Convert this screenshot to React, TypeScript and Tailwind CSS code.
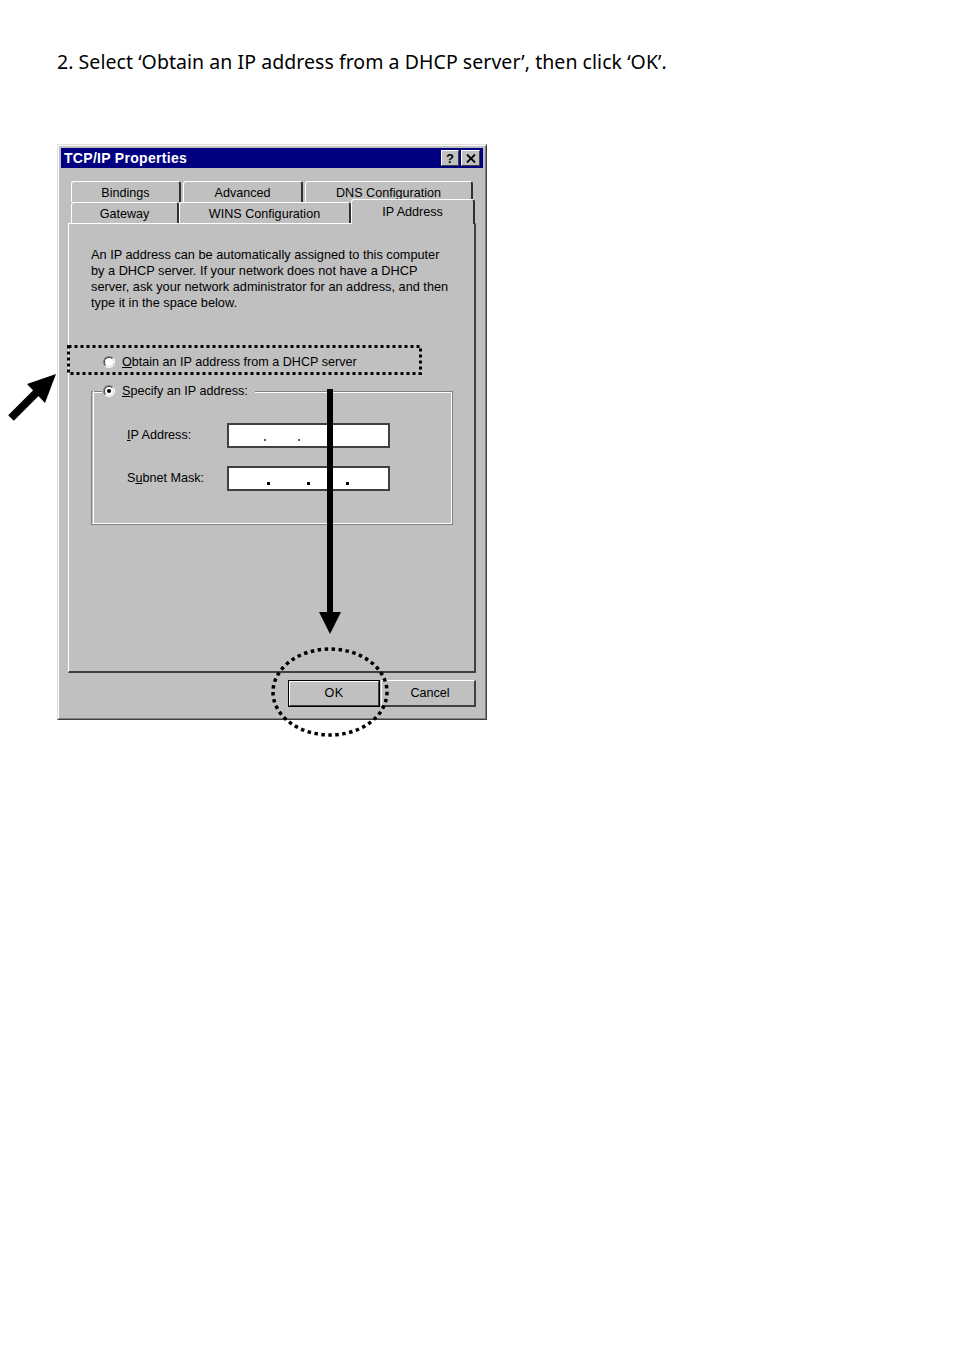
import React from "react";

const face = "bg-[#c0c0c0]";

function Tab({ w, label, selected }: { w: string; label: string; selected?: boolean }) {
  return (
    <div
      className={`${w} ${selected ? "h-[25px] -mt-[3px] z-10 pb-[1px]" : "h-[21px] pt-[2px]"} ${face} relative flex items-center justify-center border-t border-l border-t-white border-l-white rounded-tl-[3px] rounded-tr-[3px] border-r-2 border-r-[#303030] shrink-0 leading-[14px]`}
    >
      <span>{label}</span>
    </div>
  );
}

function Radio({ checked }: { checked?: boolean }) {
  return (
    <div className="w-[12px] h-[12px] rounded-full border border-t-[#808080] border-l-[#808080] border-r-white border-b-white flex items-center justify-center shrink-0">
      <div className="w-[10px] h-[10px] rounded-full bg-white border border-t-[#404040] border-l-[#404040] border-r-[#dfdfdf] border-b-[#dfdfdf] flex items-center justify-center">
        {checked && <div className="w-[4px] h-[4px] rounded-full bg-black" />}
      </div>
    </div>
  );
}

function IpBox({ dots, dark }: { dots: number[]; dark?: boolean }) {
  return (
    <div className="w-[163px] h-[25px] bg-white border-2 border-[#404040] relative">
      {dots.map((x, i) => (
        <span
          key={i}
          className={`absolute top-[14px] ${dark ? "bg-black w-[3px] h-[3px]" : "bg-[#606060] w-[2px] h-[2px]"}`}
          style={{ left: x }}
        />
      ))}
    </div>
  );
}

export default function App() {
  return (
    <div className="relative w-[954px] h-[1350px] bg-white overflow-hidden">
      <div className="pt-[49px] pl-[57px]">
        <p className="text-[19.5px] leading-[26px] text-black" style={{ fontFamily: '"Noto Sans", "Open Sans", sans-serif' }}>
          <span className="tracking-[0.05px]">2. Select ‘Obtain an IP address from a DHCP server’, then click ‘OK’.</span>
        </p>

        {/* Dialog */}
        <div
          className={`mt-[69px] w-[430px] h-[576px] ${face} border-t border-l border-t-[#dfdfdf] border-l-[#dfdfdf] border-r border-b border-r-[#404040] border-b-[#404040] text-[12.6px] text-black`}
          style={{ fontFamily: '"Liberation Sans", Arial, sans-serif' }}
        >
          <div className="h-full border-t border-l border-t-white border-l-white border-r border-b border-r-[#808080] border-b-[#808080] p-[2px] flex flex-col">
            {/* Title bar */}
            <div className="h-[20px] bg-[#000080] flex items-center justify-between pl-[3px] pr-[2px]">
              <span className="text-white font-bold text-[14px] tracking-[0.3px]">TCP/IP Properties</span>
              <div className="flex gap-[2px] mr-[1px]">
                <div className="w-[18px] h-[16px] bg-[#c0c0c0] border border-t-white border-l-white border-r-[#404040] border-b-[#404040] flex items-center justify-center font-bold text-[13px] leading-none">?</div>
                <div className="w-[19px] h-[16px] bg-[#c0c0c0] border border-t-white border-l-white border-r-[#404040] border-b-[#404040] flex items-center justify-center">
                  <svg width="10" height="9" viewBox="0 0 10 9">
                    <path d="M1 0.5 L9 8.5 M9 0.5 L1 8.5" stroke="black" strokeWidth="1.8" />
                  </svg>
                </div>
              </div>
            </div>

            {/* Body */}
            <div className="pl-[7px] pt-[13px] flex flex-col">
              {/* Tabs */}
              <div className="pl-[3px] flex flex-col">
                <div className="flex gap-[2px]">
                  <Tab w="w-[110px]" label="Bindings" />
                  <Tab w="w-[120px]" label="Advanced" />
                  <Tab w="w-[168px]" label="DNS Configuration" />
                </div>
                <div className="flex">
                  <Tab w="w-[108px]" label="Gateway" />
                  <Tab w="w-[172px]" label="WINS Configuration" />
                  <Tab w="w-[124px]" label="IP Address" selected />
                </div>
              </div>

              {/* Panel */}
              <div className="w-[408px] h-[450px] border-t border-l border-t-white border-l-white border-r-2 border-b-2 border-r-[#404040] border-b-[#404040] -mt-[1px] flex flex-col">
                <div className="pl-[22px] pt-[23px] leading-[16px] text-[12.75px]">
                  <p>An IP address can be automatically assigned to this computer</p>
                  <p>by a DHCP server. If your network does not have a DHCP</p>
                  <p>server, ask your network administrator for an address, and then</p>
                  <p>type it in the space below.</p>
                </div>

                <div className="pl-[34px] pt-[43px] flex items-center gap-[7px] h-[16px] box-content">
                  <Radio />
                  <span><span className="underline">O</span>btain an IP address from a DHCP server</span>
                </div>

                {/* Group box */}
                <div className="ml-[22px] mt-[14px] w-[362px] h-[141px] flex flex-col">
                  <div className="flex items-center h-[14px]">
                    <div className="w-[10px]" />
                    <div className="flex items-center gap-[7px] px-[2px]">
                      <Radio checked />
                      <span><span className="underline">S</span>pecify an IP address:</span>
                    </div>
                  </div>
                  <div className="flex-1 -mt-[7px] border border-t-0 border-[#808080] relative">
                    <div className="absolute inset-0 border-r border-b border-white" />
                    <div className="absolute top-0 left-[163px] right-0 border-t border-t-[#808080]" />
                    <div className="absolute top-[1px] left-[163px] right-[0px] border-t border-t-white" />
                    <div className="absolute top-0 left-0 w-[10px] border-t border-t-[#808080]" />
                    <div className="absolute top-[1px] left-[1px] w-[9px] border-t border-t-white" />
                    <div className="absolute top-0 bottom-0 left-[1px] border-l border-l-white" />
                    <div className="pt-[32px] pl-[35px] flex flex-col gap-[18px]">
                      <div className="flex items-center">
                        <span className="w-[100px]"><span className="underline">I</span>P Address:</span>
                        <IpBox dots={[35, 69]} />
                      </div>
                      <div className="flex items-center">
                        <span className="w-[100px]">S<span className="underline">u</span>bnet Mask:</span>
                        <IpBox dots={[38, 78, 117]} dark />
                      </div>
                    </div>
                  </div>
                </div>
              </div>

              {/* Buttons */}
              <div className="flex justify-end w-[408px] mt-[7px] gap-[1px]">
                <div className="w-[92px] h-[27px] border border-black">
                  <div className="w-full h-full border-t border-l border-t-white border-l-white border-r border-b border-r-[#404040] border-b-[#404040] flex items-center justify-center">
                    <span className="tracking-[0.5px]">OK</span>
                  </div>
                </div>
                <div className="w-[95px] h-[27px] border-t border-l border-t-white border-l-white border-r-2 border-b-2 border-r-[#404040] border-b-[#404040] flex items-center justify-center pl-[4px]">
                  Cancel
                </div>
              </div>
            </div>
          </div>
        </div>
      </div>

      {/* Annotations */}
      <svg className="absolute inset-0 pointer-events-none" width="954" height="1350" viewBox="0 0 954 1350">
        <rect x="68.5" y="346.5" width="352" height="27" fill="none" stroke="black" strokeWidth="3" strokeDasharray="3 3" />
        <ellipse cx="330" cy="692" rx="57" ry="43" fill="none" stroke="black" strokeWidth="3.5" strokeDasharray="3.5 3.5" />
        <line x1="330" y1="389" x2="330" y2="614" stroke="black" strokeWidth="6" />
        <polygon points="319,612 341,612 330,634" fill="black" />
        <line x1="11" y1="418" x2="38" y2="391" stroke="black" strokeWidth="8" />
        <polygon points="56,374 27,384 45,403" fill="black" />
      </svg>
    </div>
  );
}
